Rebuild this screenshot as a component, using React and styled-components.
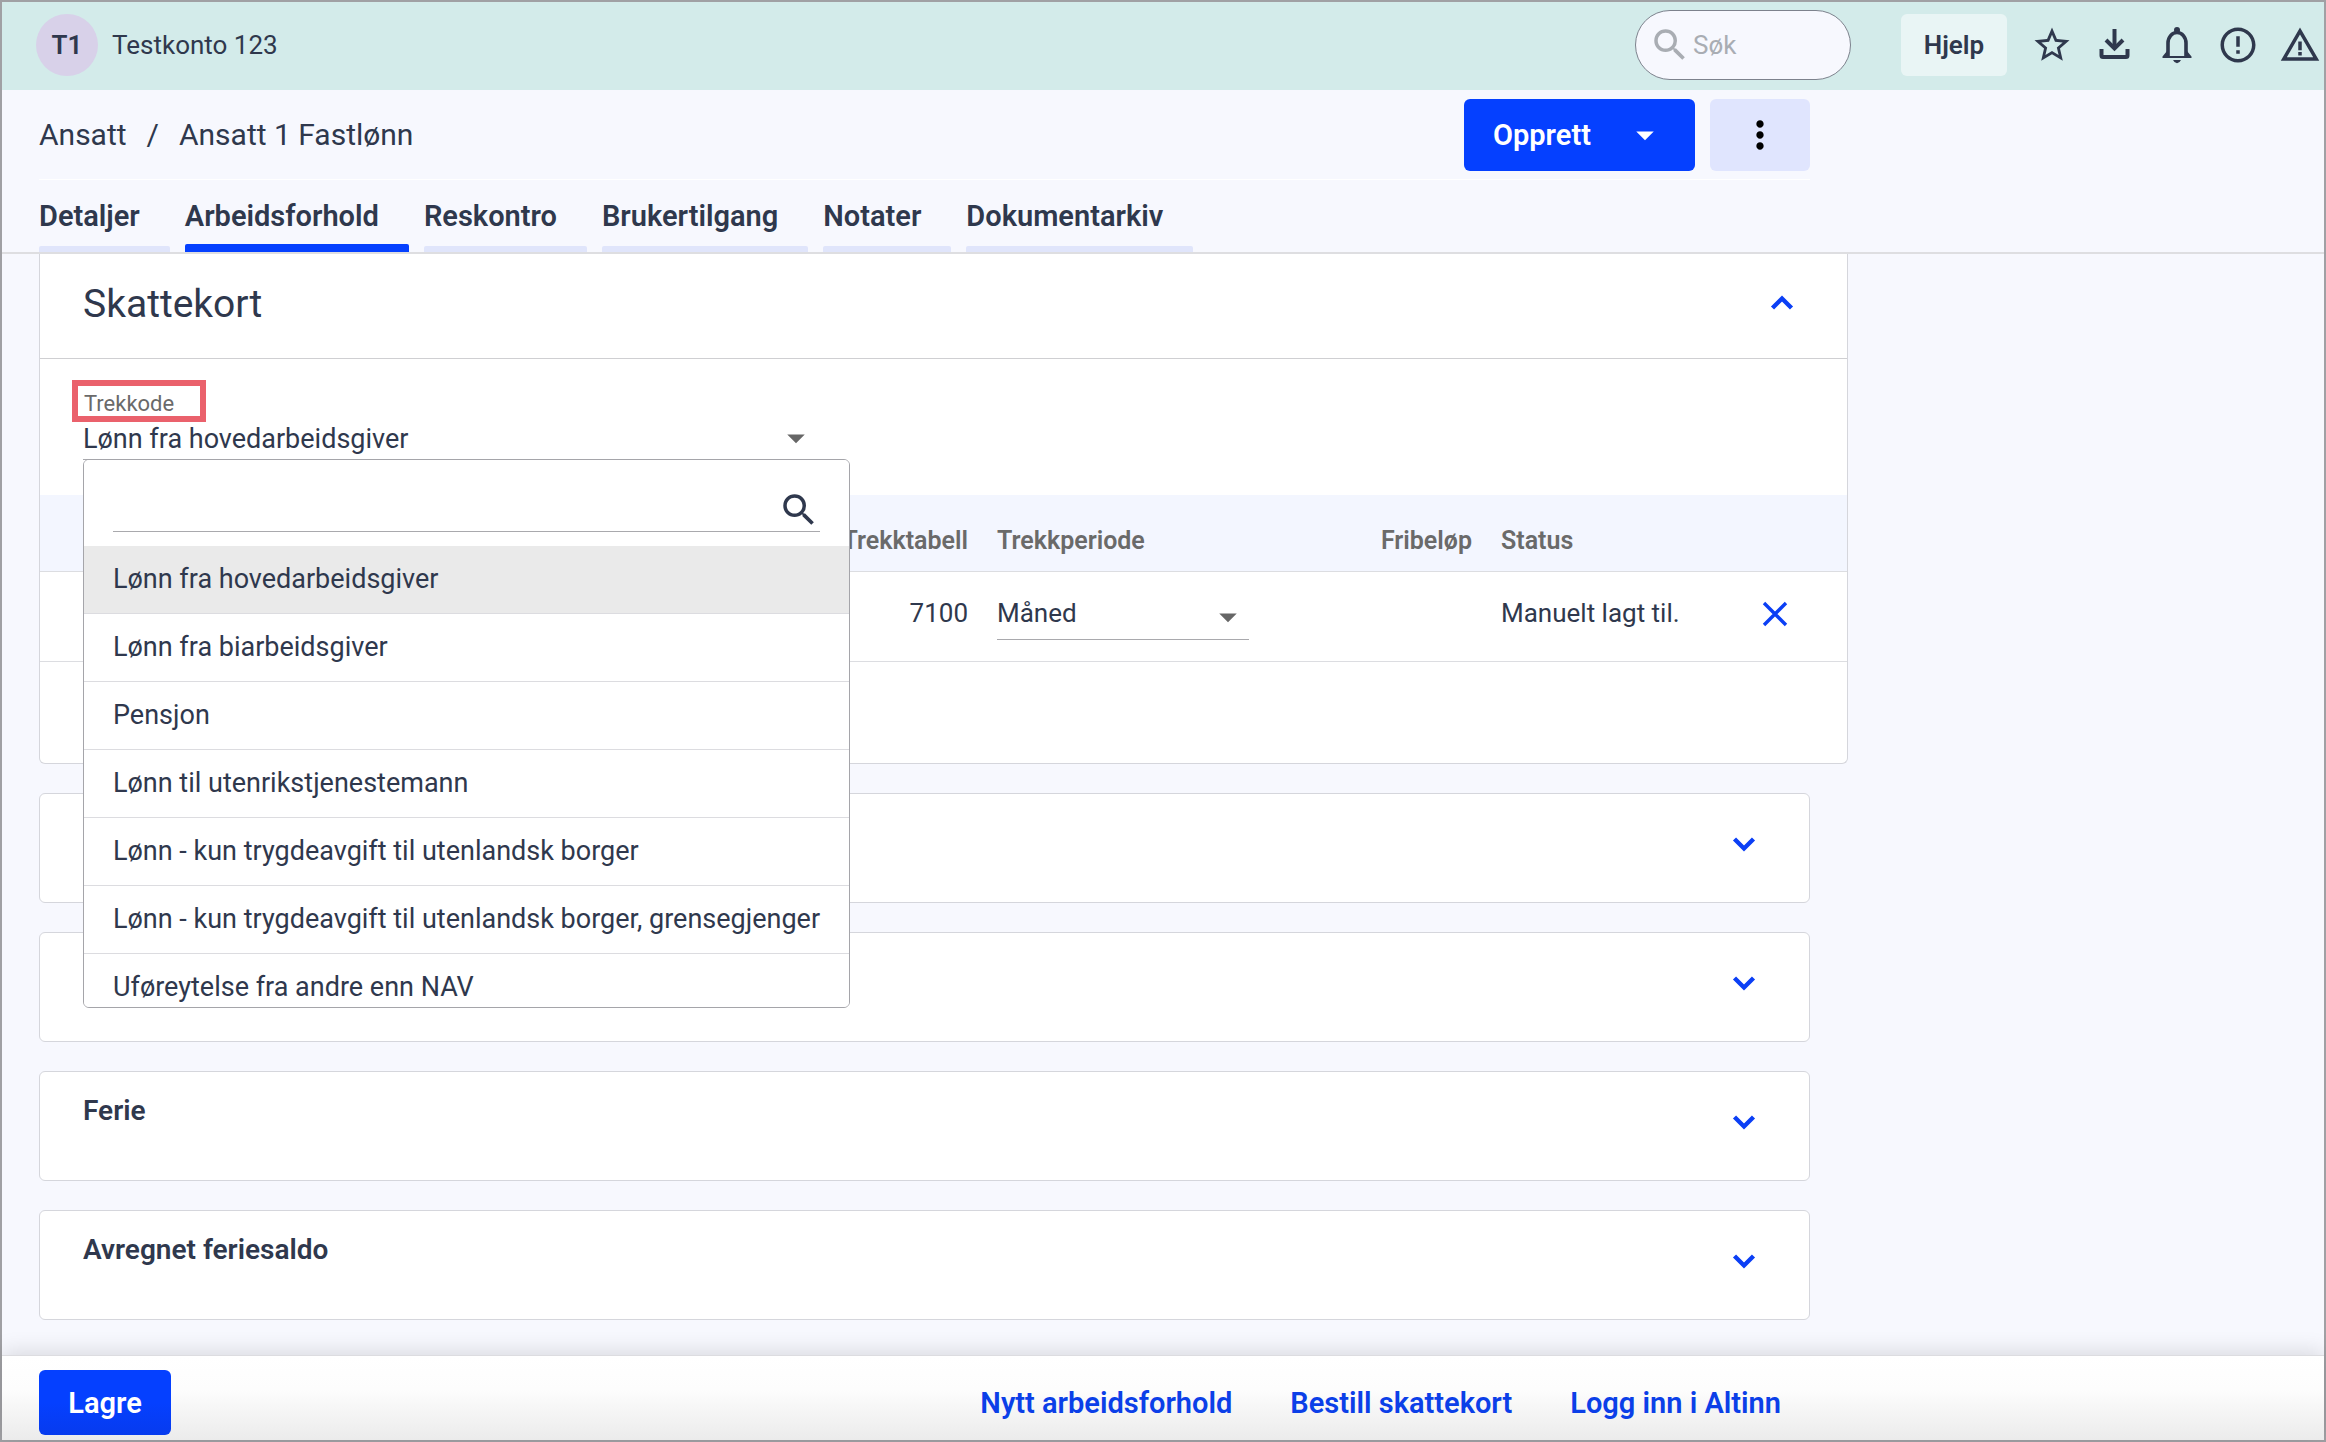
import React from 'react';
import styled, { createGlobalStyle } from 'styled-components';
import {
  MdArrowDropDown,
  MdErrorOutline,
  MdMoreVert,
  MdSearch,
  MdStarBorder,
  MdWarningAmber,
} from 'react-icons/md';

const GlobalStyle = createGlobalStyle`
  * {
    box-sizing: border-box;
  }
  body {
    margin: 0;
    background: #f7f8fe;
  }
  body, button, input, select {
    font-family: Roboto, 'Liberation Sans', sans-serif;
    font-size: 26px;
    line-height: 30px;
    color: #2f384d;
  }
  button, select, input {
    border: 0;
    padding: 0;
    margin: 0;
    background: none;
  }
  button, select {
    cursor: pointer;
  }
  a {
    text-decoration: none;
  }
  svg {
    display: block;
    flex-shrink: 0;
  }
`;

const Frame = styled.div`
  display: flex;
  flex-direction: column;
  min-height: 100vh;
  border: 2px solid #a0a0a4;
`;

const TopBar = styled.header`
  display: flex;
  align-items: center;
  height: 88px;
  padding: 0 3px 2px 34px;
  background: #d3ebea;
`;

const Avatar = styled.span`
  display: flex;
  align-items: center;
  justify-content: center;
  width: 62px;
  height: 62px;
  margin-right: 14px;
  border-radius: 50%;
  background: #d8d1e9;
  font-weight: 600;
`;

const SearchBox = styled.label`
  display: flex;
  align-items: center;
  gap: 2px;
  width: 216px;
  height: 70px;
  margin: 0 50px 0 auto;
  padding: 0 13px;
  border: 1px solid #7d828d;
  border-radius: 35px;
  background: #f7f8fe;
  color: #a9adb3;
  input {
    min-width: 0;
    flex: 1;
    outline: none;
  }
  input::placeholder {
    color: #a9adb3;
    opacity: 1;
  }
`;

const HelpButton = styled.button`
  width: 106px;
  height: 62px;
  margin-right: 24px;
  border-radius: 6px;
  background: #e9f5f5;
  font-weight: 600;
`;

const TopIcons = styled.div`
  display: flex;
  gap: 20px;
`;

const IconButton = styled.button`
  display: flex;
  color: ${({ $blue }) => ($blue ? '#0b3ff5' : '#2f384d')};
`;

const PageHead = styled.div`
  padding: 0 514px 0 37px;
  border-bottom: 2px solid #dedee1;
`;

const TitleRow = styled.div`
  display: flex;
  align-items: center;
  gap: 15px;
  padding: 9px 0 8px;
  border-bottom: 1px solid #fff;
`;

const Breadcrumb = styled.nav`
  display: flex;
  gap: 20px;
  margin-right: auto;
  font-size: 30px;
  line-height: 34px;
  a {
    color: inherit;
  }
`;

const CreateButton = styled.button`
  display: flex;
  align-items: center;
  justify-content: space-between;
  width: 231px;
  height: 72px;
  padding: 0 29px;
  border-radius: 6px;
  background: #0540ff;
  color: #fff;
  font-size: 29px;
  font-weight: 600;
`;

const MoreButton = styled.button`
  display: flex;
  align-items: center;
  justify-content: center;
  width: 100px;
  height: 72px;
  border-radius: 6px;
  background: #e0e5fe;
  color: #000;
`;

const Tabs = styled.nav`
  display: flex;
  gap: 15px;
  height: 72px;
`;

const Tab = styled.a`
  position: relative;
  padding: 20px 30px 0 0;
  color: #2f384d;
  font-size: 29px;
  line-height: 32px;
  font-weight: 600;
  &::after {
    content: '';
    position: absolute;
    left: 0;
    right: 0;
    bottom: 0;
    height: ${({ $active }) => ($active ? '8px' : '6px')};
    border-radius: 2px 2px 0 0;
    background: ${({ $active }) => ($active ? '#0540ff' : '#e0e5fb')};
  }
`;

const Main = styled.main`
  display: flex;
  flex-direction: column;
  gap: 29px;
  padding: 0 514px 35px 37px;
`;

const TaxCard = styled.section`
  margin-right: -38px;
  padding-bottom: 101px;
  border: 1px solid #d5d6dc;
  border-top: 0;
  border-radius: 0 0 6px 6px;
  background: #fff;
`;

const TaxHead = styled.div`
  display: flex;
  align-items: center;
  justify-content: space-between;
  height: 105px;
  padding: 0 43px 4px;
  border-bottom: 1px solid #cfcfd2;
  h2 {
    margin: 0;
    font-size: 39px;
    line-height: 44px;
    font-weight: 400;
  }
`;

const CodeField = styled.div`
  position: relative;
  max-width: 735px;
  margin: 21px 0 35px 43px;
`;

const CodeLabel = styled.label`
  display: inline-block;
  margin-left: -11px;
  padding: 6px 26px 0 6px;
  border: 6px solid #ea616c;
  color: #6a6a6a;
  font-size: 22px;
  line-height: 24px;
  vertical-align: top;
`;

const SelectWrap = styled.div`
  position: relative;
  color: #666;
  select {
    display: block;
    width: 100%;
    height: ${({ $cell }) => ($cell ? '42px' : '38px')};
    padding-bottom: ${({ $cell }) => ($cell ? '11px' : '4px')};
    border-bottom: 1px solid #a9a9ad;
    border-radius: 0;
    font-size: ${({ $cell }) => ($cell ? '26px' : '27px')};
    appearance: none;
    outline: none;
  }
  svg {
    position: absolute;
    top: ${({ $cell }) => ($cell ? '-2px' : '-5px')};
    right: ${({ $cell }) => ($cell ? '0' : '1px')};
    pointer-events: none;
  }
`;

const Menu = styled.div`
  position: absolute;
  z-index: 2;
  top: calc(100% - 1px);
  left: 0;
  width: 767px;
  max-height: 549px;
  overflow-y: auto;
  scrollbar-width: none;
  border: 1px solid #a5a5aa;
  border-radius: 6px;
  background: #fff;
`;

const MenuSearch = styled.label`
  display: flex;
  align-items: flex-end;
  height: 44px;
  margin: 28px 29px 14px;
  border-bottom: 1px solid #a9a9ad;
  input {
    flex: 1;
    outline: none;
  }
`;

const Options = styled.ul`
  margin: 0;
  padding: 0;
  list-style: none;
`;

const Option = styled.li`
  height: 68px;
  padding: 18px 29px;
  border-bottom: 1px solid #dcdce0;
  background: ${({ $selected }) => ($selected ? '#eaeaea' : '#fff')};
  font-size: 27px;
  white-space: nowrap;
  cursor: pointer;
`;

const Table = styled.table`
  width: 100%;
  border-collapse: separate;
  border-spacing: 0;
  table-layout: fixed;
  th, td {
    padding: 26px 15px 21px;
    border-bottom: 1px solid #dcdde1;
    text-align: left;
    vertical-align: top;
  }
  th {
    padding: 31px 15px 15px;
    background: #f3f6ff;
    color: #6a6a6a;
    font-size: 25px;
    font-weight: 600;
  }
`;

const NumCell = styled.td`
  && {
    padding-right: 14px;
    text-align: right;
  }
`;

const RemoveButton = styled(IconButton)`
  align-items: center;
  height: 32px;
  margin: 0 auto;
`;

const Panel = styled.section`
  display: flex;
  align-items: flex-start;
  justify-content: space-between;
  height: 110px;
  padding: 24px 43px 0;
  border: 1px solid #d5d6dc;
  border-radius: 6px;
  background: #fff;
  h3 {
    margin: 0;
    font-size: 28px;
    font-weight: 600;
  }
  button {
    margin: 4px 0 0 auto;
  }
`;

const Footer = styled.footer`
  position: sticky;
  bottom: 0;
  display: flex;
  align-items: center;
  gap: 58px;
  margin-top: auto;
  padding: 14px 543px 5px 37px;
  border-top: 1px solid #dcdce0;
  background: linear-gradient(#fff, #fdfdfd 40%, #ebebeb);
  box-shadow: 0 -4px 20px rgba(0, 0, 0, 0.12);
  a {
    color: #0b3fe8;
    font-size: 29px;
    font-weight: 600;
  }
`;

const SaveButton = styled.button`
  width: 132px;
  height: 65px;
  margin-right: auto;
  border-radius: 6px;
  background: linear-gradient(#0540ff 50%, #073bee);
  color: #fff;
  font-size: 29px;
  font-weight: 600;
`;

const DownloadIcon = () => (
  <svg width="42" height="42" viewBox="0 0 42 42" fill="none" stroke="currentColor" strokeWidth="4">
    <path d="M21.500 5v17" />
    <path d="M13 16l8.500 8.500 8.500-8.500" />
    <path d="M8.500 25v6.500q0 1.500 1.500 1.500h23q1.500 0 1.500-1.500V25" />
  </svg>
);

const BellIcon = () => (
  <svg width="42" height="42" viewBox="0 0 42 42" fill="none" stroke="currentColor" strokeWidth="3.600">
    <path d="M13 32V19a9 10.500 0 0 1 18 0v13" />
    <path d="M7.500 32.500L12 27v5h20v-5l4.500 5.500v1.500h-29z" fill="currentColor" stroke="none" />
    <circle cx="22" cy="6" r="3" fill="currentColor" stroke="none" />
    <path d="M18 36h8q-1.500 3.200-4 3.200t-4-3.200z" fill="currentColor" stroke="none" />
  </svg>
);

const CrossIcon = () => (
  <svg width="26" height="26" viewBox="0 0 26 26" fill="none" stroke="currentColor" strokeWidth="3.400">
    <path d="M2 2l22 22M24 2L2 24" />
  </svg>
);

const Chevron = ({ up }) => (
  <svg width="44" height="44" viewBox="0 0 44 44" fill="none" stroke="currentColor" strokeWidth="4.400">
    <path d={up ? 'M12.500 26l9.500-9.500 9.500 9.500' : 'M12.500 17l9.500 9.500 9.500-9.500'} />
  </svg>
);

const tabs = ['Detaljer', 'Arbeidsforhold', 'Reskontro', 'Brukertilgang', 'Notater', 'Dokumentarkiv'];

const codes = [
  'Lønn fra hovedarbeidsgiver',
  'Lønn fra biarbeidsgiver',
  'Pensjon',
  'Lønn til utenrikstjenestemann',
  'Lønn - kun trygdeavgift til utenlandsk borger',
  'Lønn - kun trygdeavgift til utenlandsk borger, grensegjenger',
  'Uføreytelse fra andre enn NAV',
];

const panels = [
  { id: 'panel-1' },
  { id: 'panel-2' },
  { id: 'ferie', title: 'Ferie' },
  { id: 'feriesaldo', title: 'Avregnet feriesaldo' },
];

const Header = () => (
  <TopBar>
    <Avatar>T1</Avatar>
    <span>Testkonto 123</span>
    <SearchBox>
      <MdSearch size={42} />
      <input type="text" placeholder="Søk" aria-label="Søk" />
    </SearchBox>
    <HelpButton type="button">Hjelp</HelpButton>
    <TopIcons>
      <IconButton type="button" aria-label="Favoritter">
        <MdStarBorder size={42} />
      </IconButton>
      <IconButton type="button" aria-label="Last ned">
        <DownloadIcon />
      </IconButton>
      <IconButton type="button" aria-label="Varsler">
        <BellIcon />
      </IconButton>
      <IconButton type="button" aria-label="Informasjon">
        <MdErrorOutline size={42} />
      </IconButton>
      <IconButton type="button" aria-label="Advarsler">
        <MdWarningAmber size={42} />
      </IconButton>
    </TopIcons>
  </TopBar>
);

const TaxCode = () => (
  <CodeField>
    <CodeLabel htmlFor="trekkode">Trekkode</CodeLabel>
    <SelectWrap>
      <select id="trekkode" defaultValue={codes[0]}>
        {codes.map((code) => (
          <option key={code}>{code}</option>
        ))}
      </select>
      <MdArrowDropDown size={42} />
    </SelectWrap>
    <Menu>
      <MenuSearch>
        <input type="text" aria-label="Søk i trekkoder" />
        <MdSearch size={42} />
      </MenuSearch>
      <Options role="listbox" aria-label="Trekkode">
        {codes.map((code, i) => (
          <Option key={code} role="option" aria-selected={i === 0} $selected={i === 0}>
            {code}
          </Option>
        ))}
      </Options>
    </Menu>
  </CodeField>
);

const TaxTable = () => (
  <Table>
    <colgroup>
      <col />
      <col width="182" />
      <col width="282" />
      <col width="222" />
      <col width="217" />
      <col width="144" />
    </colgroup>
    <thead>
      <tr>
        <th />
        <NumCell as="th">Trekktabell</NumCell>
        <th id="periode">Trekkperiode</th>
        <NumCell as="th">Fribeløp</NumCell>
        <th>Status</th>
        <th />
      </tr>
    </thead>
    <tbody>
      <tr>
        <td />
        <NumCell>7100</NumCell>
        <td>
          <SelectWrap $cell>
            <select aria-labelledby="periode">
              <option>Måned</option>
            </select>
            <MdArrowDropDown size={42} />
          </SelectWrap>
        </td>
        <td />
        <td>Manuelt lagt til.</td>
        <td>
          <RemoveButton type="button" $blue aria-label="Fjern">
            <CrossIcon />
          </RemoveButton>
        </td>
      </tr>
    </tbody>
  </Table>
);

const App = () => {
  return (
    <Frame>
      <GlobalStyle />
      <Header />
      <PageHead>
        <TitleRow>
          <Breadcrumb>
            <a href="#ansatt">Ansatt</a>
            <span>/</span>
            <span>Ansatt 1 Fastlønn</span>
          </Breadcrumb>
          <CreateButton type="button">
            Opprett
            <MdArrowDropDown size={42} />
          </CreateButton>
          <MoreButton type="button" aria-label="Flere valg">
            <MdMoreVert size={44} />
          </MoreButton>
        </TitleRow>
        <Tabs>
          {tabs.map((tab) => (
            <Tab key={tab} href={`#${tab.toLowerCase()}`} $active={tab === 'Arbeidsforhold'}>
              {tab}
            </Tab>
          ))}
        </Tabs>
      </PageHead>
      <Main>
        <TaxCard>
          <TaxHead>
            <h2>Skattekort</h2>
            <IconButton type="button" $blue aria-label="Skjul">
              <Chevron up />
            </IconButton>
          </TaxHead>
          <TaxCode />
          <TaxTable />
        </TaxCard>
        {panels.map(({ id, title }) => (
          <Panel key={id}>
            {title && <h3>{title}</h3>}
            <IconButton type="button" $blue aria-label="Vis">
              <Chevron />
            </IconButton>
          </Panel>
        ))}
      </Main>
      <Footer>
        <SaveButton type="button">Lagre</SaveButton>
        <a href="#nytt">Nytt arbeidsforhold</a>
        <a href="#bestill">Bestill skattekort</a>
        <a href="#altinn">Logg inn i Altinn</a>
      </Footer>
    </Frame>
  );
};

export default App;
